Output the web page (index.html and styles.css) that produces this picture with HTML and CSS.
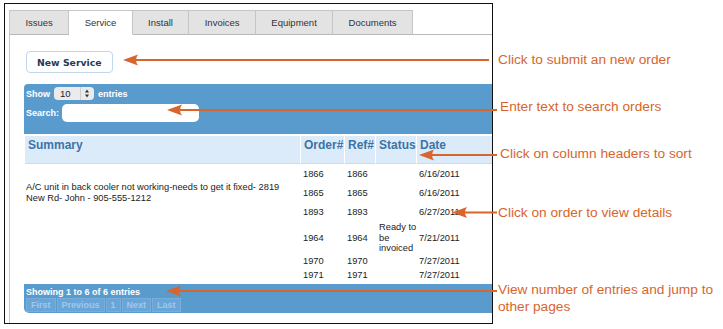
FILE: index.html
```html
<!DOCTYPE html>
<html>
<head>
    <title>Service Orders - Help</title>
    <meta name="viewport" content="width=device-width, initial-scale=1">
    <link rel="stylesheet" href="styles.css">
</head>
<body>
    <div class="page">
        <div class="frame">
            <div class="widget">
                <!-- Tabs -->
                <ul class="tabs">
                    <li>Issues</li>
                    <li class="active">Service</li>
                    <li>Install</li>
                    <li>Invoices</li>
                    <li>Equipment</li>
                    <li>Documents</li>
                </ul>

                <div class="panel">
                    <button class="new-btn" type="button">New Service</button>

                    <!-- Table controls -->
                    <div class="bar-top">
                        <div class="length">
                            Show
                            <span class="select">
                                <span class="select-val">10</span>
                                <svg class="select-arrows" width="13" height="13" viewBox="0 0 13 13">
                                    <line x1="0.5" y1="0" x2="0.5" y2="13" stroke="#cfcfcf"/>
                                    <path d="M5 5.5 L7 2.5 L9 5.5 Z" fill="#333"/>
                                    <path d="M5 7.5 L7 10.5 L9 7.5 Z" fill="#333"/>
                                </svg>
                            </span>
                            entries
                        </div>
                        <div class="filter">Search: <span class="search"></span></div>
                    </div>

                    <table class="orders">
                        <colgroup>
                            <col class="c-summary"><col class="c-order"><col class="c-ref"><col class="c-status"><col class="c-date">
                        </colgroup>
                        <thead>
                            <tr><th>Summary</th><th>Order#</th><th>Ref#</th><th>Status</th><th>Date</th></tr>
                        </thead>
                        <tbody>
                            <tr class="r1">
                                <td rowspan="3" class="summary">A/C unit in back cooler not working-needs to get it fixed- 2819 New Rd- John - 905-555-1212</td>
                                <td>1866</td><td>1866</td><td class="status"></td><td>6/16/2011</td>
                            </tr>
                            <tr class="r2"><td>1865</td><td>1865</td><td class="status"></td><td>6/16/2011</td></tr>
                            <tr class="r3"><td>1893</td><td>1893</td><td class="status"></td><td>6/27/2011</td></tr>
                            <tr class="r4"><td></td><td>1964</td><td>1964</td><td class="status">Ready to be invoiced</td><td>7/21/2011</td></tr>
                            <tr class="r5"><td></td><td>1970</td><td>1970</td><td class="status"></td><td>7/27/2011</td></tr>
                            <tr class="r6"><td></td><td>1971</td><td>1971</td><td class="status"></td><td>7/27/2011</td></tr>
                        </tbody>
                    </table>

                    <div class="bar-bottom">
                        <div class="info">Showing 1 to 6 of 6 entries</div>
                        <div class="paging">
                            <span>First</span><span>Previous</span><span>1</span><span>Next</span><span>Last</span>
                        </div>
                    </div>
                </div>
            </div>
        </div>

        <!-- Callout texts -->
        <div class="notes">
            <p class="note n1">Click to submit an new order</p>
            <p class="note n2">Enter text to search orders</p>
            <p class="note n3">Click on column headers to sort</p>
            <p class="note n4">Click on order to view details</p>
            <p class="note n5">View number of entries and jump to other pages</p>
        </div>

        <!-- Callout arrows drawn over the screenshot -->
        <svg class="arrows" width="723" height="329" viewBox="0 0 723 329">
            <g stroke="#d7652e" stroke-width="2" fill="none">
                <line x1="134" y1="60" x2="489" y2="60"/>
                <line x1="178" y1="110" x2="497" y2="110"/>
                <line x1="430" y1="155" x2="497" y2="155"/>
                <line x1="463" y1="212.5" x2="497" y2="212.5"/>
                <line x1="177" y1="291" x2="497" y2="291"/>
            </g>
            <g fill="#d7652e">
                <path d="M123 60 L138 54.5 Q134 60 138 65.5 Z"/>
                <path d="M167 110 L182 104.5 Q178 110 182 115.5 Z"/>
                <path d="M419 155 L434 149.5 Q430 155 434 160.5 Z"/>
                <path d="M452 212.5 L467 207 Q463 212.5 467 218 Z"/>
                <path d="M166 291 L181 285.5 Q177 291 181 296.5 Z"/>
            </g>
        </svg>
    </div>
</body>
</html>
```

FILE: styles.css
```css
body { margin: 0; background: #fff; font-family: "Liberation Sans", Arial, sans-serif; }
.page { position: relative; display: flex; align-items: flex-start; width: 723px; height: 329px; overflow: hidden; }

.frame { box-sizing: border-box; width: 489px; height: 321px; margin: 3px 0 0 4px; border: 1px solid #111; background: #fff; overflow: hidden; display: flex; flex-direction: column; }
.widget { flex: 1; margin: 6px 0 0 4px; border-left: 1px solid #c9c9c9; }

.tabs { display: flex; margin: 0; padding: 0; list-style: none; border-bottom: 1px solid #b9b9b9; }
.tabs li { height: 23px; line-height: 23px; padding: 0 15.4px; font-size: 9.5px; color: #333; background: #e3e3e3; border-top: 1px solid #c6c6c6; border-right: 1px solid #c6c6c6; margin-bottom: -1px; border-bottom: 1px solid #b9b9b9; }
.tabs li.active { background: #fff; border-bottom-color: #fff; }

.panel { padding: 16px 0 0 15px; }
.new-btn { display: block; height: 22px; margin-left: 1px; padding: 0 10px; background: #fff; border: 1px solid #c3d7ea; border-radius: 4px; font-family: "DejaVu Sans", sans-serif; font-weight: bold; font-size: 9.3px; color: #233a55; cursor: pointer; }

.bar-top { width: 500px; margin: 11px 0 0 -1px; padding: 3px 0 12px 2px; background: #5a9bcd; border-radius: 4px 0 0 0; color: #fff; font-weight: bold; font-size: 9px; }
.length { display: flex; align-items: center; height: 13px; }
.select { display: inline-flex; align-items: center; width: 40px; height: 13px; margin: 0 4px; background: #ebebeb; border-radius: 4px; color: #222; font-weight: normal; font-size: 9.5px; }
.select-val { flex: 1; padding-left: 6px; }
.select-arrows { margin-right: 1px; }
.filter { display: flex; align-items: center; height: 18px; margin-top: 4px; }
.search { display: inline-block; width: 137px; height: 18px; margin-left: 3px; background: #fff; border-radius: 5px; }

.orders { width: 500px; margin-top: 2px; border-collapse: separate; border-spacing: 0; table-layout: fixed; font-size: 9.3px; color: #222; }
.c-summary { width: 276px; }
.c-order { width: 44px; }
.c-ref { width: 31px; }
.c-status { width: 41px; }
.orders th { height: 28px; padding: 2px 2px 0 3px; box-sizing: border-box; text-align: left; vertical-align: top; font-size: 12px; color: #3c73a8; background: #dcebf9; border-right: 1px solid #fff; border-bottom: 1px solid #c7dcef; }
.orders td { padding: 0 2px; line-height: 10.6px; vertical-align: middle; }
.orders td.summary { padding-left: 1px; }
.orders td.status { padding: 0 0 0 3px; }
.r1 { height: 20px; }
.r2 { height: 19px; }
.r3 { height: 19px; }
.r4 { height: 32px; }
.r5 { height: 15px; }
.r6 { height: 12px; }

.bar-bottom { width: 500px; margin: 3px 0 0 -1px; padding: 3px 0 1px 2px; background: #5a9bcd; border-radius: 0 0 0 5px; color: #fff; font-weight: bold; font-size: 9px; }
.info { line-height: 11px; }
.paging { display: flex; gap: 1px; height: 14px; }
.paging span { padding: 0 4px; line-height: 12px; border: 1px solid #78aedb; background: #69a5d7; color: #9fc9ec; }

.notes { margin-left: 5px; }
.note { margin: 0; font-size: 13.7px; line-height: 17px; color: #d7652e; }
.n1 { margin-top: 51px; }
.n2 { margin: 30px 0 0 2px; }
.n3 { margin: 30px 0 0 2px; }
.n4 { margin-top: 42px; }
.n5 { margin-top: 60px; width: 220px; }

.arrows { position: absolute; left: 0; top: 0; pointer-events: none; }
```
